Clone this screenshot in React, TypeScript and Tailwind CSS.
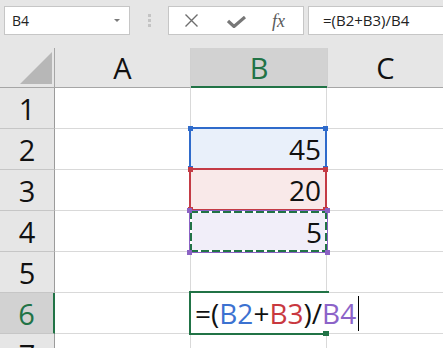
import React from "react";

function FormulaBar() {
  return (
    <div className="flex h-[48px] items-start bg-[#e6e6e6] pl-[4px] pt-[6px]">
      {/* Name box */}
      <div className="flex h-[29px] w-[126px] items-center border border-[#c6c6c6] bg-white pl-[7px] pr-[9px] text-[14px] text-[#222]">
        <span>B4</span>
        <svg className="ml-auto" width="6" height="3" viewBox="0 0 6 3">
          <path d="M0 0h6L3 3z" fill="#7a7a7a" />
        </svg>
      </div>

      {/* Grip dots */}
      <div className="ml-[18px] mt-[8px] flex flex-col gap-[2px]">
        <span className="h-[3px] w-[3px] bg-[#c4c4c4]" />
        <span className="h-[3px] w-[3px] bg-[#c4c4c4]" />
        <span className="h-[3px] w-[3px] bg-[#c4c4c4]" />
      </div>

      {/* Cancel / Enter / Insert function */}
      <div className="ml-[17px] flex h-[29px] w-[136px] items-center border border-[#c6c6c6] bg-white pl-[16px]">
        <svg width="13" height="13" viewBox="0 0 13 13">
          <path d="M0.5 0.5L12.5 12.5M12.5 0.5L0.5 12.5" stroke="#6e6e6e" strokeWidth="1.4" />
        </svg>
        <svg className="ml-[29px] mt-[2px]" width="19" height="12" viewBox="0 0 19 12">
          <path d="M1 5L7 10.5L18 1" stroke="#777" strokeWidth="3.2" fill="none" />
        </svg>
        <span className="ml-[26px] font-['Liberation_Serif',serif] text-[18px] italic leading-none text-[#5a5a5a]">
          fx
        </span>
      </div>

      {/* Formula input */}
      <div className="ml-[4px] flex h-[29px] flex-1 items-center border border-r-0 border-[#c6c6c6] bg-white pl-[14px] text-[15px] text-[#222]">
        =(B2+B3)/B4
      </div>
    </div>
  );
}

function Handles({ color }: { color: string }) {
  const base = "absolute z-20 h-[5px] w-[5px]";
  return (
    <>
      <span className={`${base} -left-[3px] -top-[3px]`} style={{ background: color }} />
      <span className={`${base} -right-[3px] -top-[3px]`} style={{ background: color }} />
      <span className={`${base} -bottom-[3px] -left-[3px]`} style={{ background: color }} />
      <span className={`${base} -bottom-[3px] -right-[3px]`} style={{ background: color }} />
    </>
  );
}

function RowHeader({ n, active = false }: { n: number; active?: boolean }) {
  return (
    <div
      className={[
        "flex items-center justify-center border-b border-b-[#c6c6c6] text-[29px] leading-none",
        active
          ? "border-r-2 border-r-[#217346] bg-[#d2d2d2] text-[#217346]"
          : "border-r border-r-[#9b9b9b] bg-[#e6e6e6] text-[#111]",
      ].join(" ")}
    >
      {n}
    </div>
  );
}

const cell = "relative border-b border-r border-[#d9d9d9]";
const lastCell = "border-b border-[#d9d9d9]";

function Sheet() {
  return (
    <div className="grid grid-cols-[55px_136px_136px_1fr] grid-rows-[40px_repeat(7,41px)] bg-white">
      {/* Header row */}
      <div className="flex items-end justify-end border-b border-r border-[#a6a6a6] bg-[#e6e6e6] pb-[3px] pr-[2px]">
        <svg width="32" height="32" viewBox="0 0 32 32">
          <path d="M32 0V32H0z" fill="#b7b7b7" />
        </svg>
      </div>
      <div className="flex items-center justify-center border-b border-r border-b-[#a6a6a6] border-r-[#d0d0d0] bg-[#e6e6e6] text-[29px] leading-none text-[#111]">
        A
      </div>
      <div className="flex items-center justify-center border-b-2 border-b-[#217346] bg-[#d2d2d2] text-[29px] leading-none text-[#217346]">
        B
      </div>
      <div className="flex items-center justify-center border-b border-l border-b-[#a6a6a6] border-l-[#d0d0d0] bg-[#e6e6e6] text-[29px] leading-none text-[#111]">
        C
      </div>

      {/* Row 1 */}
      <RowHeader n={1} />
      <div className={cell} />
      <div className={cell} />
      <div className={lastCell} />

      {/* Row 2 */}
      <RowHeader n={2} />
      <div className={cell} />
      <div className={cell}>
        <div className="absolute -bottom-[1px] -left-[2px] -right-[1px] -top-[2px] z-10 flex items-center justify-end border-2 border-[#2f6bcb] bg-[#e9f0fa] pr-[4px] text-[28px] leading-none text-[#111]">
          45
          <Handles color="#2f6bcb" />
        </div>
      </div>
      <div className={lastCell} />

      {/* Row 3 */}
      <RowHeader n={3} />
      <div className={cell} />
      <div className={cell}>
        <div className="absolute -bottom-[1px] -left-[2px] -right-[1px] -top-[2px] z-10 flex items-center justify-end border-2 border-[#c43b45] bg-[#f9e9e9] pr-[4px] text-[28px] leading-none text-[#111]">
          20
          <Handles color="#c43b45" />
        </div>
      </div>
      <div className={lastCell} />

      {/* Row 4 (copy marquee) */}
      <RowHeader n={4} />
      <div className={cell} />
      <div className={cell}>
        <div className="absolute -bottom-[2px] -left-[2px] -right-[2px] -top-[1px] z-10 border border-[#8b62c4] bg-white">
          <span className="absolute left-0 right-0 top-0 h-[2px] bg-[repeating-linear-gradient(90deg,#217346_0_8px,#fff_8px_11px)]" />
          <span className="absolute bottom-0 left-0 right-0 h-[2px] bg-[repeating-linear-gradient(90deg,#217346_0_8px,#fff_8px_11px)]" />
          <span className="absolute bottom-0 left-0 top-0 w-[2px] bg-[repeating-linear-gradient(180deg,#217346_0_8px,#fff_8px_11px)]" />
          <span className="absolute bottom-0 right-0 top-0 w-[2px] bg-[repeating-linear-gradient(180deg,#217346_0_8px,#fff_8px_11px)]" />
          <div className="absolute inset-[2px] flex items-center justify-end bg-[#f1eef9] pr-[3px] text-[28px] leading-none text-[#111]">
            5
          </div>
          <Handles color="#8b62c4" />
        </div>
      </div>
      <div className={lastCell} />

      {/* Row 5 */}
      <RowHeader n={5} />
      <div className={cell} />
      <div className={cell} />
      <div className={lastCell} />

      {/* Row 6 (editing) */}
      <RowHeader n={6} active />
      <div className={cell} />
      <div className="relative border-b border-[#d9d9d9]">
        <div className="absolute -bottom-[2px] -left-[2px] -right-[2px] -top-[2px] z-10 flex items-center whitespace-nowrap border-b-2 border-l-2 border-t-2 border-[#217346] pl-[4px] text-[28px] leading-none text-[#111]">
          <span className="shrink-0">=(</span>
          <span className="shrink-0 text-[#3c72d1]">B2</span>
          <span className="shrink-0">+</span>
          <span className="shrink-0 text-[#c9383f]">B3</span>
          <span className="shrink-0">)/</span>
          <span className="shrink-0 text-[#8c63c8]">B4</span>
          <span className="ml-[2px] inline-block h-[35px] w-px shrink-0 bg-black" />
          <span className="absolute -bottom-[3px] right-0 h-[5px] w-[6px] bg-[#217346]" />
        </div>
      </div>
      <div className={lastCell} />

      {/* Row 7 */}
      <RowHeader n={7} />
      <div className={cell} />
      <div className={cell} />
      <div className={lastCell} />
    </div>
  );
}

export default function App() {
  return (
    <div className="h-[348px] w-[443px] overflow-hidden bg-white font-['Open_Sans',sans-serif]">
      <FormulaBar />
      <Sheet />
    </div>
  );
}
